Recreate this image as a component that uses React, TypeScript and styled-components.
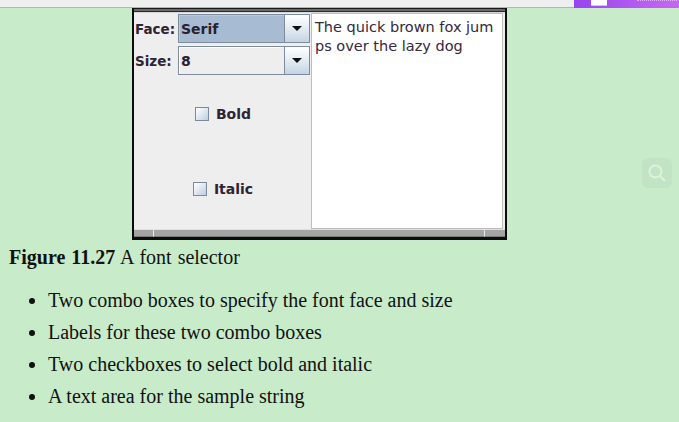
import React from "react"
import styled, { createGlobalStyle } from "styled-components"

const GlobalStyle = createGlobalStyle`
  html, body {
    margin: 0;
    padding: 0;
    background: #c8ecca;
  }
  body {
    font-family: "Liberation Serif", "Times New Roman", serif;
    color: #111;
  }
`

const sampleLines = ["The quick brown fox jum", "ps over the lazy dog"]

const bullets = [
  "Two combo boxes to specify the font face and size",
  "Labels for these two combo boxes",
  "Two checkboxes to select bold and italic",
  "A text area for the sample string",
]

export default function App() {
  return (
    <>
      <GlobalStyle />
      <Page>
        <TopBar>
          <PurpleTab>
            <TabIcon />
            <TabGhost />
          </PurpleTab>
        </TopBar>
        <Content>
          <Window>
            <TitleStrip />
            <WindowBody>
              <ControlPanel>
                <ComboGrid>
                  <FieldLabel>Face:</FieldLabel>
                  <Combo selected>
                    <ComboValue>Serif</ComboValue>
                    <ArrowButton>
                      <Arrow />
                    </ArrowButton>
                  </Combo>
                  <FieldLabel>Size:</FieldLabel>
                  <Combo>
                    <ComboValue>8</ComboValue>
                    <ArrowButton>
                      <Arrow />
                    </ArrowButton>
                  </Combo>
                </ComboGrid>
                <CheckRow $top={31}>
                  <CheckBox />
                  <CheckLabel>Bold</CheckLabel>
                </CheckRow>
                <CheckRow $top={59}>
                  <CheckBox />
                  <CheckLabel>Italic</CheckLabel>
                </CheckRow>
              </ControlPanel>
              <SampleArea>
                {sampleLines.map((line) => (
                  <SampleLine key={line}>{line}</SampleLine>
                ))}
              </SampleArea>
            </WindowBody>
            <StatusStrip>
              <StripSegment $width={19} />
              <StripSegment $grow />
              <StripSegment $width={20} />
            </StatusStrip>
          </Window>
          <Caption>
            <strong>Figure 11.27</strong> A font selector
          </Caption>
          <BulletList>
            {bullets.map((b) => (
              <li key={b}>{b}</li>
            ))}
          </BulletList>
        </Content>
        <SearchButton>
          <svg width="20" height="20" viewBox="0 0 20 20" fill="none" stroke="#dcf2dd" strokeWidth="2" strokeLinecap="round">
            <circle cx="8.5" cy="8.5" r="6" />
            <path d="M13 13l4.5 4.5" />
          </svg>
        </SearchButton>
      </Page>
    </>
  )
}

const Page = styled.div`
  position: relative;
  width: 679px;
  height: 422px;
  overflow: hidden;
`

const TopBar = styled.div`
  display: flex;
  justify-content: flex-end;
  height: 7px;
  background: #efefef;
  border-bottom: 1px solid #b4b4b4;
`

const PurpleTab = styled.div`
  display: flex;
  align-items: flex-start;
  gap: 30px;
  width: 105px;
  height: 8px;
  padding-left: 17px;
  box-sizing: border-box;
  background: linear-gradient(90deg, #9646ee, #c868f2);
`

const TabIcon = styled.div`
  width: 16px;
  height: 5px;
  background: #ffffff;
  border-bottom: 1px solid #d9c4f8;
`

const TabGhost = styled.div`
  width: 40px;
  height: 2px;
  border-top: 1px dotted rgba(255, 255, 255, 0.5);
`

const Content = styled.div`
  padding-left: 9px;
`

const Window = styled.div`
  width: 375px;
  margin-left: 123px;
  box-sizing: border-box;
  border: 2px solid #0c0c0c;
  border-top: none;
  border-bottom-width: 3px;
  background: #9e9e9e;
`

const TitleStrip = styled.div`
  height: 2px;
  background: #6a6a6a;
  border-top: 1px solid #1a1a1a;
  border-bottom: 1px solid #2a2a2a;
`

const WindowBody = styled.div`
  display: flex;
  height: 216px;
  background: #eeeeee;
  padding-right: 2px;
  border-top: 1px solid #d8d8d8;
`

const ControlPanel = styled.div`
  display: flex;
  flex-direction: column;
  width: 176px;
  padding-left: 1px;
  padding-top: 1px;
  font-family: "DejaVu Sans", Verdana, sans-serif;
`

const ComboGrid = styled.div`
  display: grid;
  grid-template-columns: 40px 132px;
  grid-auto-rows: 29px;
  column-gap: 3px;
  row-gap: 3px;
  align-items: center;
`

const FieldLabel = styled.span`
  font-size: 13.5px;
  font-weight: bold;
  color: #2e2434;
`

const Combo = styled.div<{ selected?: boolean }>`
  display: flex;
  height: 29px;
  box-sizing: border-box;
  border: 1px solid #7c8c9c;
  background: ${({ selected }) => (selected ? "#a7bcd2" : "#eeeeee")};
  box-shadow: inset 1px 1px 0 ${({ selected }) => (selected ? "#b8cadb" : "#ffffff")};
`

const ComboValue = styled.span`
  flex: 1;
  display: flex;
  align-items: center;
  padding-left: 2px;
  font-size: 14px;
  font-weight: bold;
  color: #2a2030;
`

const ArrowButton = styled.div`
  display: flex;
  align-items: center;
  justify-content: center;
  width: 24px;
  border-left: 1px solid #7c8c9c;
  background: linear-gradient(180deg, #ffffff 0%, #e6eef6 45%, #c4d4e4 100%);
`

const Arrow = styled.div`
  width: 0;
  height: 0;
  border-left: 5px solid transparent;
  border-right: 5px solid transparent;
  border-top: 5px solid #111;
`

const CheckRow = styled.div<{ $top: number }>`
  display: flex;
  align-items: center;
  justify-content: center;
  gap: 7px;
  height: 16px;
  margin-top: ${({ $top }) => $top}px;
`

const CheckBox = styled.div`
  width: 14px;
  height: 14px;
  box-sizing: border-box;
  border: 1px solid #7d8b99;
  background: linear-gradient(135deg, #ffffff 0%, #dfe8f2 50%, #bccde0 100%);
`

const CheckLabel = styled.span`
  font-size: 14px;
  font-weight: bold;
  color: #2e2434;
`

const SampleArea = styled.div`
  flex: 1;
  display: flex;
  flex-direction: column;
  background: #ffffff;
  border: 1px solid #bdbdbd;
  padding: 4px 0 0 3px;
  font-family: "DejaVu Sans", Verdana, sans-serif;
  font-size: 14.5px;
  color: #33293c;
`

const SampleLine = styled.span`
  line-height: 19px;
  white-space: nowrap;
`

const StatusStrip = styled.div`
  display: flex;
  height: 7px;
  border-top: 1px solid #e0e0e0;
  background: #a4a4a4;
`

const StripSegment = styled.div<{ $width?: number; $grow?: boolean }>`
  flex: ${({ $grow }) => ($grow ? "1" : "none")};
  width: ${({ $width }) => ($width ? `${$width}px` : "auto")};
  border-right: 1px solid #e8e8e8;
  border-bottom: 1px solid #7a7a7a;
  &:last-child {
    border-right: none;
  }
`

const Caption = styled.div`
  margin-top: 6px;
  font-size: 20px;
  line-height: 23px;
  word-spacing: 1px;
`

const BulletList = styled.ul`
  margin: 15px 0 0;
  padding-left: 39px;
  font-size: 20px;
  li {
    line-height: 32px;
  }
`

const SearchButton = styled.div`
  position: absolute;
  left: 642px;
  top: 158px;
  width: 30px;
  height: 30px;
  border-radius: 6px;
  background: #c2e4c4;
  display: flex;
  align-items: center;
  justify-content: center;
`
